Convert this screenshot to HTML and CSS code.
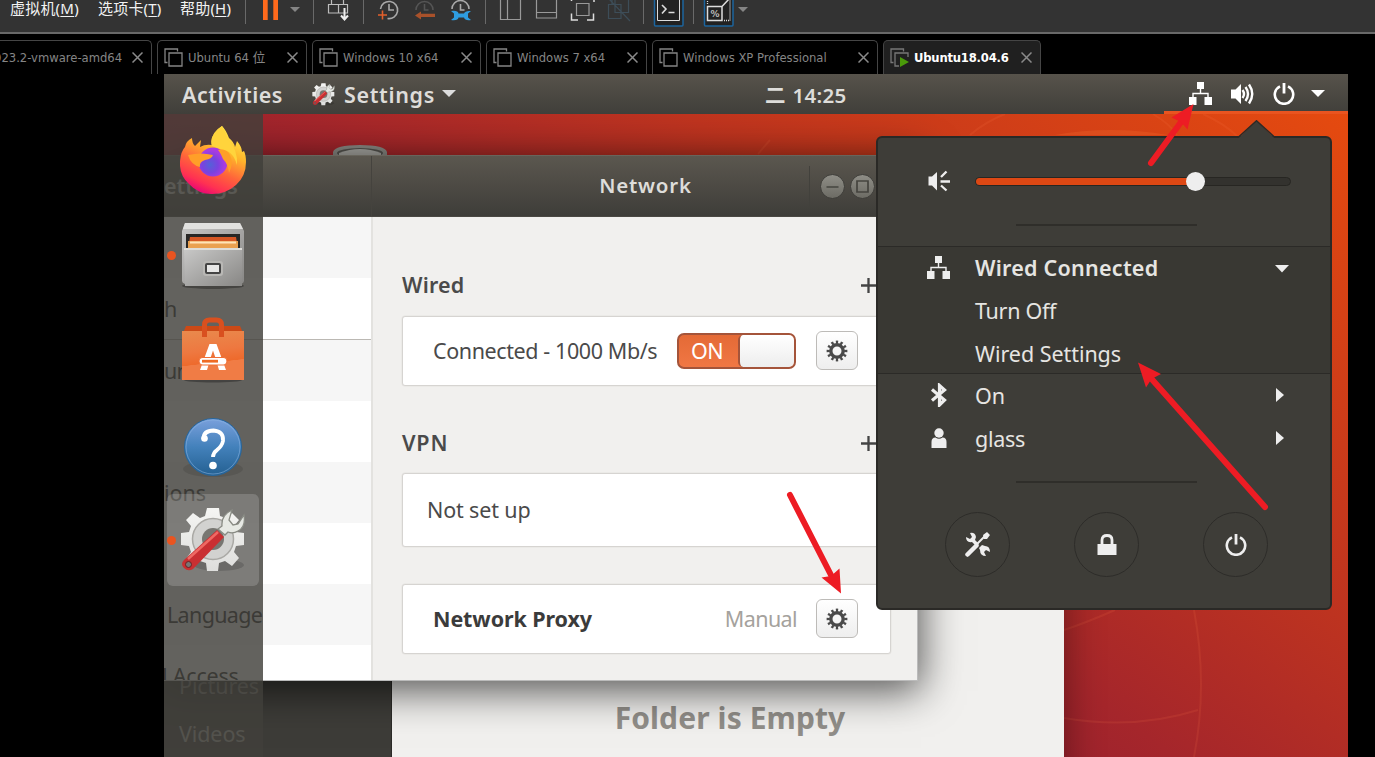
FILE: index.html
```html
<!DOCTYPE html>
<html lang="zh">
<head>
<meta charset="utf-8">
<title>Ubuntu18.04.6</title>
<link rel="stylesheet" href="styles.css">
</head>
<body>
<svg class="defs" width="0" height="0">
  <defs>
    <symbol id="vm" viewBox="0 0 19 19"><path d="M3.500 14.500H1V1H13.500V3.500M5 5H18V18H5Z" fill="none" stroke="currentColor" stroke-width="1.300"/></symbol>
    <symbol id="x" viewBox="0 0 11 11"><path d="M.5.5 10.500 10.500M10.500.5.5 10.500" stroke="currentColor" stroke-width="1.500"/></symbol>
    <symbol id="net" viewBox="0 0 23 23"><path d="M8 0h7v7H8zM0 15h7.500v8H0zM15.500 15H23v8h-7.500z" fill="currentColor"/><path d="M11.500 7v4.500M4 15v-3.500h15V15" fill="none" stroke="currentColor" stroke-width="1.400"/></symbol>
    <symbol id="power" viewBox="0 0 22 22"><path d="M7 3.300A9.200 9.200 0 1 0 15 3.300" fill="none" stroke="currentColor" stroke-width="2.600"/><path d="M11 0v10.500" stroke="currentColor" stroke-width="2.800"/></symbol>
    <symbol id="gear" viewBox="0 0 22 22"><g fill="none" stroke="currentColor"><circle cx="11" cy="11" r="6.200" stroke-width="3.400"/><circle cx="11" cy="11" r="8.800" stroke-width="3.200" pathLength="24" stroke-dasharray="1 1" stroke-dashoffset=".5"/></g></symbol>
    <symbol id="wrenchgear" viewBox="0 0 64 66">
      <ellipse cx="38" cy="58" rx="25" ry="6" fill="#000" opacity=".15"/>
      <path fill="url(#silver)" d="M26 1h12l1 8 6 2 6-5 7 7-5 6 2 6 8 1v12l-8 1-2 6 5 6-7 8-7-5-6 2-1 8H26l-1-8-6-2-7 5-7-7 5-7-2-6-8-1V26l8-1 2-6-5-6 7-7 7 5 5-2z"/>
      <circle cx="32" cy="32" r="20.500" fill="#d2d2d0" stroke="#aaa9a5" stroke-width="1.500"/>
      <circle cx="32" cy="32" r="11" fill="#777671"/>
      <path d="M3 53 36 23l7 7L12 62q-5 3-9-1-4-4 0-8z" fill="#c92f32"/><path d="m7 52 30-27" stroke="#ef6963" stroke-width="2.500"/><circle cx="7.500" cy="57.500" r="3" fill="#777" stroke="#711d22"/>
      <path d="m37 22 4-3q-1-11 10-16l-3 10 4 5 5-1 6-9q2 12-6 16-5 3-10 1l-3 3z" fill="#e7e9e4" stroke="#898b84" stroke-width="1.300"/>
    </symbol>
    <linearGradient id="silver" x2="0" y2="1"><stop stop-color="#f5f5f3"/><stop offset="1" stop-color="#dededc"/></linearGradient>
    <linearGradient id="metal" x2="1" y2="1"><stop stop-color="#c9c9c8"/><stop offset="1" stop-color="#888785"/></linearGradient>
    <linearGradient id="knob" x2="0" y2="1"><stop stop-color="#8f8e87"/><stop offset="1" stop-color="#6c6b64"/></linearGradient>
    <linearGradient id="fox" x1=".75" y1="0" x2=".3" y2="1"><stop stop-color="#fff44f"/><stop offset=".35" stop-color="#ffb52b"/><stop offset=".62" stop-color="#ff643a"/><stop offset=".84" stop-color="#ff3152"/><stop offset="1" stop-color="#e5007a"/></linearGradient>
    <radialGradient id="globe" cx=".4" cy=".6"><stop stop-color="#5560d8"/><stop offset=".55" stop-color="#7a42df"/><stop offset="1" stop-color="#a83be0"/></radialGradient>
    <linearGradient id="bag" x2=".15" y2="1"><stop stop-color="#e98a4d"/><stop offset=".45" stop-color="#ee7840"/><stop offset=".7" stop-color="#ee6a2c"/><stop offset=".71" stop-color="#f07c45"/></linearGradient>
    <linearGradient id="blue" x2="0" y2="1"><stop stop-color="#7aa0dc"/><stop offset=".5" stop-color="#4381bb"/><stop offset="1" stop-color="#246091"/></linearGradient>
  </defs>
</svg>

<header class="menubar">
  <span class="menu m1">虚拟机(<u>M</u>)</span>
  <span class="menu m2">选项卡(<u>T</u>)</span>
  <span class="menu m3">帮助(<u>H</u>)</span>
  <i class="sep"></i>
  <svg width="67" height="32" viewBox="246 0 67 32"><path d="M263 0h4.700v20H263zM273.300 0h4.700v20h-4.700z" fill="#ff6a1c"/><path d="M290 7h10l-5 5z" fill="#858585"/></svg>
  <i class="sep"></i>
  <svg width="49" height="32" viewBox="314 0 49 32" fill="none" stroke="#bdbdbd" stroke-width="1.200"><path d="M331.500-2V4.500H343.500V-2M328.500 4.500H347.500V13H328.500ZM338.500 4.500V13"/><path d="M344.500 8V19M341 15.500l3.500 4 3.500-4" stroke="#eee" stroke-width="2"/></svg>
  <i class="sep"></i>
  <svg width="121" height="32" viewBox="364 0 121 32" fill="none" stroke-width="1.600"><path d="M380.500 9a8.600 8.600 0 1 1 7 9.500M389 4v6h5" stroke="#a9a9a9"/><path d="M378 15h9M382.500 10.500v9" stroke="#e2602c"/><path d="M416 10a8.500 8.500 0 0 1 17 0M424.500 4v6h4" stroke="#555"/><path d="M421 11.500v2.200h14v3.300h-14v2.500l-6-4z" fill="#a9512a"/><path d="M452 9a8.500 8.500 0 0 1 17 0M460.500 4v6h4" stroke="#a9a9a9"/><path d="M451 11q7-1 7.500 2.500H464q1-3 7-2.500l-3 2.500v4l3 2.500q-6 1-7-2.500H458.500Q458 21 451 20l3-2.500v-4z" fill="#2e9de0"/></svg>
  <i class="sep"></i>
  <svg width="157" height="32" viewBox="486 0 157 32" fill="none" stroke="#999" stroke-width="1.200"><path d="M500.500-1V19.500H520.500V-1M507.500 0V19.500M536.500-1V18H556.500V-1M536.500 12.500H556.500"/><path d="M576.500 3.500h12.500v12h-12.500z"/><path d="M571.500 1V-1M594-1V2M571.500 13.500V20H578M587 20H593.500V13.500" stroke="#ddd" stroke-width="1.500"/><path d="M612-1V4M608.500 4.500H621V18.500H608.500ZM615-1V12.500H628.500V0M609-1 630 21" stroke="#3d4d58"/></svg>
  <i class="sep"></i>
  <svg width="49" height="32" viewBox="644 0 49 32" fill="none"><path d="M654.500-2V25q0 1 1 1H682q1 0 1-1V-2" fill="#222" stroke="#1c659f" stroke-width="1.500"/><path d="M657.500-1V20.500H679.500V-1" stroke="#ddd"/><path d="m662 5 4 4-4 4.500M668.500 12.500h6" stroke="#ddd" stroke-width="1.600"/></svg>
  <i class="sep"></i>
  <svg width="60" height="32" viewBox="694 0 60 32" fill="none"><path d="M704.500-2V25q0 1 1 1H732q1 0 1-1V-2" fill="#222" stroke="#1c659f" stroke-width="1.500"/><path d="M707.500 6.500H722V20.500H707.500ZM722 6.500 729-1" stroke="#ddd" stroke-width="1.500"/><path d="M724 20.500H730V0M707.500-1V5" stroke="#ddd" stroke-width="1.300" stroke-dasharray="1 1"/><text x="710.500" y="17" class="pct">%</text><path d="M738 7h10l-5 5z" fill="#858585"/></svg>
</header>

<nav class="tabs">
  <div class="tab t1"><span>023.2-vmware-amd64</span><svg class="close"><use href="#x"/></svg></div>
  <div class="tab t2"><svg class="vm"><use href="#vm"/></svg><span>Ubuntu 64 位</span><svg class="close"><use href="#x"/></svg></div>
  <div class="tab t3"><svg class="vm"><use href="#vm"/></svg><span>Windows 10 x64</span><svg class="close"><use href="#x"/></svg></div>
  <div class="tab t4"><svg class="vm"><use href="#vm"/></svg><span>Windows 7 x64</span><svg class="close"><use href="#x"/></svg></div>
  <div class="tab t5"><svg class="vm"><use href="#vm"/></svg><span>Windows XP Professional</span><svg class="close"><use href="#x"/></svg></div>
  <div class="tab t6 active"><svg class="vm" viewBox="0 0 19 19"><path d="M3.500 14.500H1V1H13.500V3.500M9 18H5V5H18V9" fill="none" stroke="#777" stroke-width="1.300"/><path d="m10 9 9 5-9 5z" fill="#4a9a0a"/></svg><span>Ubuntu18.04.6</span><svg class="close"><use href="#x"/></svg></div>
</nav>

<main class="desktop">
  <svg class="wallpaper" width="1184" height="683" viewBox="164 74 1184 683" fill="none">
    <g stroke="#ff7a50" stroke-opacity=".13" stroke-width="2"><path d="M970 135Q985 122 1005 114M1153 114Q1170 124 1177 135M1203 114Q1225 124 1238 137M1064 630Q1088 622 1115 610M1194 610Q1208 685 1194 757M1064 718Q1135 730 1198 710M758 154 770 140"/></g>
    <path d="M1055 135Q1110 125 1168 135z" fill="#f06a30" fill-opacity=".3"/>
    <path d="M333 160v-8q2-7 27-7t27 7v8z" fill="#8c8c86"/><ellipse cx="360" cy="153" rx="23" ry="5" fill="#55544f"/><path d="M339 153q21-8 42 0v3h-42z" fill="#aaa9a4"/>
  </svg>

  <section class="files">
    <aside><span>Pictures</span><span>Videos</span></aside>
    <div class="empty">Folder is Empty</div>
  </section>

  <section class="settings">
    <div class="titlebar">
      <div class="tb-left">ettings</div>
      <div class="tb-right"><h1>Network</h1>
        <div class="winbtns"><svg width="25" height="25" viewBox="0 0 25 25"><circle cx="12.500" cy="12.500" r="12" fill="url(#knob)" stroke="#3d3c38"/><path d="M6.500 13H18.500" stroke="#45443f" stroke-width="1.500"/></svg><svg width="25" height="25" viewBox="0 0 25 25"><circle cx="12.500" cy="12.500" r="12" fill="url(#knob)" stroke="#3d3c38"/><path d="M7 7h11v11H7z" fill="none" stroke="#45443f" stroke-width="1.700"/></svg></div>
      </div>
    </div>
    <div class="body">
      <ul class="cats"><li></li><li class="line">h</li><li class="bgd">un</li><li></li><li>ions</li><li></li><li class="lang">Language</li><li><b>l Access</b></li></ul>
      <div class="panel">
        <h2><span class="s-wired">Wired</span><svg width="15" height="15"><path d="M0 7.500h15M7.500 0v15" stroke="#444" stroke-width="2.300"/></svg></h2>
        <div class="card c1"><span class="s-conn">Connected - 1000 Mb/s</span><div class="switch"><span>ON</span><i></i></div><button><svg><use href="#gear"/></svg></button></div>
        <h2 class="vpn"><span class="s-vpn">VPN</span><svg width="15" height="15"><path d="M0 7.500h15M7.500 0v15" stroke="#444" stroke-width="2.300"/></svg></h2>
        <div class="card c2"><span class="s-not">Not set up</span></div>
        <div class="card c3"><strong>Network Proxy</strong><span class="manual">Manual</span><button><svg><use href="#gear"/></svg></button></div>
      </div>
    </div>
  </section>

  <div class="topbar">
    <span class="act">Activities</span>
    <svg class="appicon" width="23" height="23"><use href="#wrenchgear"/></svg>
    <span class="app">Settings</span>
    <svg width="14" height="8"><path d="M0 0h14L7 7z" fill="#ddd"/></svg>
    <span class="clock"><span class="er">二</span> 14:25</span>
    <div class="status">
      <svg width="23" height="23"><use href="#net"/></svg>
      <svg width="24" height="22" viewBox="0 0 24 22"><path d="M0 6.500h4.500L10 1v20l-5.500-5.500H0z" fill="#fff"/><path d="M11.500 7q3 4 0 8M14.500 4q5 7 0 14M18 1.500q6.500 9.500 0 19" fill="none" stroke="#fff" stroke-width="2.400"/></svg>
      <svg width="22" height="22"><use href="#power"/></svg>
      <svg width="14" height="8"><path d="M0 0h14L7 7z" fill="#fff"/></svg>
    </div>
  </div>

  <nav class="dock">
    <div class="app-slot"><svg width="66" height="68" viewBox="0 0 66 68"><path fill="url(#fox)" d="M42 0q4 4 7 12 5 4 6 9l2-6q5 6 5 11l2-1q2 4 2 11 0 14-10 23-10 9-24 9-14 0-23-10Q-1 49 0 35 1 25 5 21q1-6 7-9 0 5 3 8l6-6-1 7q5-3 12-2-2-12 10-19z"/><circle cx="33" cy="36" r="14.500" fill="url(#globe)"/><path d="M8 29q13-3 25 0-1 4-8 5-6 2-5 7-9-2-12-12zM38 24q8-3 12 5 4 8-1 18-1-9-6-14-3-7-5-9z" fill="#ff9f28"/><path d="M32 20q-4-9 10-20 4 6 6 13 10 11 9 26-4-15-17-16z" fill="#ffd43c"/></svg></div>
    <div class="app-slot run files-app"><svg width="64" height="68" viewBox="0 0 64 68"><ellipse cx="32" cy="64" rx="31" ry="3" fill="#000" opacity=".3"/><path d="M4 1h55l4 8v50q0 2-3 3H4q-3-1-3-3V9z" fill="url(#metal)"/><path d="M4 1h55l3 6H2z" fill="#e1e1df"/><path d="M5 12h54v20H5z" fill="#282725"/><path d="M9 15h46l2 12H7z" fill="#d65724"/><path d="M7 19h50v11H7z" fill="#eaa150"/><path d="M9 20.500h46" stroke="#ffe4b8" stroke-width="2"/><path d="M3 26h58v38H4z" fill="url(#metal)"/><path d="M3 27h58" stroke="#deddd9" stroke-width="2"/><rect x="22" y="39" width="20" height="15" rx="3" fill="#b9b8b5"/><rect x="25" y="42" width="14" height="9" rx="1" fill="#e7e7e6" stroke="#444" stroke-width="2"/></svg></div>
    <div class="app-slot bag-app"><svg width="64" height="66" viewBox="0 0 64 66"><ellipse cx="32" cy="63" rx="29" ry="2.500" fill="#000" opacity=".3"/><path d="M5 9h54l3 7H2z" fill="#cc4916"/><path fill="url(#bag)" d="M1 14h62v49H1z"/><path d="M23.500 20V8q0-5 5-5h7q5 0 5 5v12" fill="none" stroke="#d9501f" stroke-width="5"/><path d="M19 53 28.500 27h7L45 53h-7l-1.500-5h-9L26 53zM29.500 41h5L32 33.500z" fill="#fff"/><rect x="18" y="40.500" width="28" height="7.500" rx="3.700" fill="#fff" stroke="#ef7137" stroke-width="1.200"/><path d="M21 44.200h16" stroke="#ef6b24" stroke-width="2.800"/></svg></div>
    <div class="app-slot help"><svg width="62" height="62" viewBox="0 0 62 62"><ellipse cx="31" cy="53" rx="30" ry="8" fill="#000" opacity=".1"/><circle cx="31" cy="31" r="28.500" fill="url(#blue)" stroke="#26659b"/><circle cx="31" cy="31" r="27" fill="none" stroke="#8ab4e2" stroke-opacity=".55"/><path d="M21.500 23q0-8.500 10-8.500Q42 15.500 41 25q-1 5-6 9-4 3-4 7" fill="none" stroke="#fff" stroke-width="3.800"/><circle cx="22.500" cy="22.500" r="3.300" fill="#fff"/><circle cx="31" cy="49.500" r="3.800" fill="#fff"/></svg></div>
    <div class="app-slot run current"><svg width="64" height="66"><use href="#wrenchgear"/></svg></div>
  </nav>

  <section class="popover">
    <svg class="beak" width="40" height="19" viewBox="0 0 40 19"><path d="M0 18.500H1L19.500 1 38 18.500H40V19H0Z" fill="#3e3d38"/><path d="M1 17.500 19.500.8 38 17.500" fill="none" stroke="#2b2a27" stroke-width="1.500"/></svg>
    <div class="row vol"><svg class="ic" viewBox="0 0 24 24"><path d="M1.500 7.500H5L10 3v18.500l-5-5H1.500z" fill="#eee"/><path d="M13.500 12.500H23M14 8l5.500-5.500M14 16.500l5.500 5" stroke="#eee" stroke-width="2.300"/></svg><div class="slider"><i></i><b></b></div></div>
    <hr>
    <div class="group">
      <div class="row"><svg class="ic net"><use href="#net"/></svg><strong>Wired Connected</strong><svg class="chev" width="14" height="8"><path d="M0 0h14L7 7.500z" fill="#eee"/></svg></div>
      <div class="row"><i class="ic"></i><span class="s-off">Turn Off</span></div>
      <div class="row"><i class="ic"></i><span class="s-set">Wired Settings</span></div>
    </div>
    <div class="row"><svg class="ic" viewBox="0 0 24 24"><path d="m5 6.500 12.500 10.500-5 5V2.500l5 4.500L5 17.500" fill="none" stroke="#eee" stroke-width="3.200"/></svg><span class="s-on">On</span><svg class="chev r" width="8" height="14"><path d="M0 0l8 7-8 7z" fill="#eee"/></svg></div>
    <div class="row"><svg class="ic" viewBox="0 0 24 24"><circle cx="12" cy="7" r="4.700" fill="#eee"/><path d="M4.500 22v-6q0-4.500 4-4.500 3.500 2.500 7 0 4 0 4 4.500V22z" fill="#eee"/></svg><span class="s-glass">glass</span><svg class="chev r" width="8" height="14"><path d="M0 0l8 7-8 7z" fill="#eee"/></svg></div>
    <hr class="second">
    <div class="actions">
      <button><svg width="25" height="25" viewBox="0 0 25 25"><path d="m2.500 22.500 9-9" stroke="#eee" stroke-width="4.500" stroke-linecap="round"/><path d="m11 13 11-11" stroke="#eee" stroke-width="2"/><path d="m18 3 4-3 3 3-3 4h-3zM5 1q5-1 6 4l-1 3 4 4-3 2-4-4Q1 11 1 5l4 2 2-2zM14 16l3-3 3 1q5 0 5 6l-4-2-2 2 2 4q-6 0-6-6z" fill="#eee"/></svg></button>
      <button><svg width="20" height="22" viewBox="0 0 20 22"><path d="M.5 10h19v11H.5z" fill="#eee"/><path d="M5 11V6q0-4.500 5-4.500T15 6v5" fill="none" stroke="#eee" stroke-width="2.800"/></svg></button>
      <button class="pw"><svg width="22" height="22"><use href="#power"/></svg></button>
    </div>
  </section>

  <svg class="arrows" width="1184" height="683" viewBox="164 74 1184 683"><g stroke="#ed1c24" stroke-width="6" stroke-linecap="round"><path d="M1151 163 1184 118M1265 507 1149 376M790 495 832 577"/></g><path d="M1193.500 104 1171.500 117.500 1181 122 1187.500 129.500zM1138 362.500 1161 374 1151.500 379 1146 387.500zM841 593.500 821.500 577.500 831 576 839.500 568.500z" fill="#ed1c24"/></svg>
</main>
</body>
</html>
```
FILE: styles.css
```css
* { box-sizing: border-box; }
body { margin: 0; width: 1375px; height: 757px; overflow: hidden; background: #000; font-family: "Noto Sans", "Noto Sans CJK SC", sans-serif; }
.defs { position: absolute; }
svg { display: block; flex: none; }
h1, h2, ul { margin: 0; padding: 0; }
button { padding: 0; border: 0; background: none; }

.menubar { height: 34px; background: #333; border-bottom: 2px solid #696969; display: flex; padding-left: 10px; }
.menu { color: #f2f2f2; font: 15px/17px "Noto Sans", "Noto Sans CJK SC", sans-serif; letter-spacing: .2px; white-space: nowrap; flex: none; }
.menu u { text-underline-offset: 2px; text-decoration-thickness: 1px; }
.m1 { width: 88px; } .m2 { width: 82px; } .m3 { width: 65px; }
.sep { width: 1px; height: 24px; background: #696969; flex: none; }
.pct { font: bold 9px "DejaVu Sans", sans-serif; fill: #bbb; }

.tabs { display: flex; gap: 5px; height: 40px; padding-top: 6px; }
.tab { display: flex; align-items: center; height: 34px; flex: none; padding: 0 8px 1px 6px; color: #858585; border: 1px solid #454545; border-bottom: 0; border-radius: 5px 5px 0 0; font: 12.900px/21px "DejaVu Sans Condensed", "DejaVu Sans", "Noto Sans CJK SC", sans-serif; font-stretch: condensed; white-space: nowrap; }
.tab span { flex: 1; margin-left: 6px; }
.vm { width: 19px; height: 19px; margin-right: -1px; }
.close { width: 11px; height: 11px; color: #8a8a8a; }
.t1 { width: 152px; padding-left: 0; border-left: 0; border-radius: 0 5px 0 0; overflow: hidden; }
.t1 span { margin-left: -6px; }
.t2 { width: 150px; } .t3 { width: 169px; } .t4 { width: 161px; } .t5 { width: 226px; } .t6 { width: 158px; }
.active { background: #202020; color: #fff; font-weight: bold; letter-spacing: -.2px; }

.desktop { position: relative; width: 1184px; height: 683px; margin-left: 164px; overflow: hidden; background: linear-gradient(36.5deg, #9b212e 40%, #a5262b 48%, #bf341f 66%, #e84c0e 100%); }
.wallpaper, .arrows { position: absolute; left: 0; top: 0; }
.arrows { z-index: 9; }

.topbar { position: absolute; left: 0; top: 0; width: 1184px; height: 40px; display: flex; align-items: center; padding: 0 0 0 18px; background: linear-gradient(#57534b, #403f3a); color: #deddda; font-size: 21.500px; font-weight: 600; }
.act { width: 130px; letter-spacing: .5px; }
.app { margin: 0 7px 0 9px; letter-spacing: .65px; }
.clock { position: absolute; left: 601px; top: 6px; line-height: 30px; font-size: 20.500px; letter-spacing: .3px; white-space: nowrap; }
.er { margin-right: 1px; }
.status { position: absolute; right: 0; top: 0; width: 184px; height: 40px; border-bottom: 3px solid #e95420; display: flex; align-items: center; padding: 2px 0 0 25px; gap: 19px; color: #fff; }
.status svg:nth-child(2) { margin-right: -1px; }
.status svg:last-child { margin-left: -3px; }

.dock { position: absolute; left: 0; top: 40px; width: 99px; height: 643px; padding-right: 2px; background: rgba(65, 64, 59, .82); display: flex; flex-direction: column; align-items: center; gap: 3px; }
.app-slot { position: relative; width: 92px; height: 92px; flex: none; display: flex; align-items: center; justify-content: center; border-radius: 6px; }
.run::before { content: ""; position: absolute; left: 0; top: 42px; width: 9px; height: 9px; border-radius: 50%; background: #e95420; }
.current { background: rgba(255, 255, 255, .17); }
.help { padding-top: 4px; }
.files-app { padding-top: 2px; }

.files { position: absolute; left: -100px; top: 300px; width: 1000px; height: 500px; display: flex; background: #f1f0ee; box-shadow: 0 8px 36px rgba(0, 0, 0, .4); }
.files aside { width: 328px; flex: none; background: #3d3c38; border-right: 1px solid #2c2b28; padding: 288px 0 0 115px; display: flex; flex-direction: column; color: #a9a7a0; font-size: 21.500px; line-height: 48px; letter-spacing: -.1px; }
.empty { flex: 1; text-align: center; padding-top: 322px; padding-left: 4px; line-height: 44px; font-size: 30px; font-weight: 700; color: #918e89; letter-spacing: .1px; }

.settings { position: absolute; left: 0; top: 81px; width: 754px; height: 526px; background: #f1f0ee; box-shadow: 0 7px 38px 3px rgba(0, 0, 0, .65); display: flex; flex-direction: column; border-bottom: 1px solid #bbb; border-right: 1px solid #bbb; }
.titlebar { display: flex; height: 62px; flex: none; background: linear-gradient(#5b574f, #3e3d39); border-top: 1px solid #68655c; border-bottom: 1px solid #4a4843; }
.tb-left { width: 208px; border-right: 1px solid #45433e; color: #c9c7c0; font-size: 21.500px; font-weight: 600; line-height: 60px; }
.tb-right { flex: 1; position: relative; }
.tb-right h1 { text-align: center; padding-left: 2px; font-size: 20.500px; font-weight: 600; line-height: 59px; color: #deddda; letter-spacing: .75px; }
.winbtns { position: absolute; left: 437px; top: 10px; height: 41px; border-left: 1px solid #42413c; padding-left: 10px; display: flex; gap: 5px; align-items: center; }
.body { display: flex; flex: 1; min-height: 0; }
.cats { width: 209px; list-style: none; border-right: 2px solid #e3e2df; background: #fff; color: #222; font-size: 21.500px; overflow: hidden; flex: none; }
.cats li { height: 61px; line-height: 61px; white-space: nowrap; }
.cats li:nth-child(odd) { background: #f6f6f6; }
.cats .line { height: 62px; border-bottom: 1px solid #bbb8b3; }
.cats .bgd { letter-spacing: -.8px; height: 60.500px; }
.cats .lang { padding-left: 3px; letter-spacing: -.65px; }
.cats b { font-weight: 400; margin-left: -2px; line-height: 57px; letter-spacing: -.2px; }
.panel { flex: 1; padding: 48px 26px 0 29px; color: #4a4a4a; font-size: 21.500px; }
.panel h2 { display: flex; justify-content: space-between; align-items: center; font-size: 21.500px; font-weight: 600; line-height: 40px; height: 40px; margin-bottom: 11px; padding-right: 15px; letter-spacing: .2px; }
.panel .vpn { margin: 37px 0 10px; letter-spacing: .8px; }
.card { display: flex; align-items: center; background: #fff; border: 1.500px solid #d6d4d1; box-shadow: 0 0 0 .5px #e5e3e0; border-radius: 3px; height: 70px; padding: 0 31px 1px 30px; white-space: nowrap; }
.c2 { height: 74px; padding-left: 24px; }
.c3 { height: 70px; margin-top: 37px; color: #3b3b3b; padding-right: 32px; }
.card button { width: 42px; height: 39px; border: 1.500px solid #bdbbb8; border-radius: 6px; background: linear-gradient(#fff, #eee); display: flex; align-items: center; justify-content: center; color: #4a4a4a; flex: none; }
.card button svg { width: 22px; height: 22px; }
.s-conn { width: 244px; flex: none; letter-spacing: -.4px; }
.s-not { letter-spacing: -.15px; }
.switch { width: 119px; height: 36px; flex: none; border: 2px solid #a4543a; border-radius: 7px; background: linear-gradient(#e46a36, #f07744); display: flex; color: #fff; line-height: 31px; margin-right: 20px; }
.switch span { width: 59px; padding-left: 12px; letter-spacing: -.6px; }
.switch i { flex: 1; background: linear-gradient(#fff, #ededed); border-radius: 5px; border-left: 2px solid #a4543a; }
.card strong { font-weight: 700; flex: 1; letter-spacing: -.1px; }
.manual { color: #a5a29d; margin-right: 19px; letter-spacing: -.6px; }

.popover { position: absolute; left: 712px; top: 62px; width: 456px; height: 474px; background: #3e3d38; border: 2px solid #2a2926; border-radius: 6px; color: #e6e5e2; font-size: 21.500px; }
.beak { position: absolute; left: 359px; top: -18px; }
.row { display: flex; align-items: center; height: 43px; padding: 0 38px 1px 49px; white-space: nowrap; }
.ic { width: 24px; height: 24px; margin-right: 24px; flex: none; }
.ic.net { width: 23px; height: 23px; margin-right: 25px; color: #eee; }
.vol { height: 86px; padding-bottom: 0; }
.slider { position: relative; width: 316px; height: 9px; border: 1px solid #272622; border-radius: 5px; background: #33322e; }
.slider i { display: block; width: 219px; height: 7px; border-radius: 4px; background: #dd4814; }
.slider b { position: absolute; left: 210px; top: -6px; width: 19px; height: 19px; border-radius: 50%; background: #eee; }
.popover hr { width: 181px; height: 2px; border: 0; margin: 0 0 0 138px; background: #2f2e2a; }
.group { margin: 20px 0 0; height: 128px; background: #393833; box-shadow: inset 0 1px #2b2a27, inset 0 -1px #2b2a27; }
.popover strong { font-weight: 600; letter-spacing: .25px; }
.chev { margin-left: auto; margin-right: 3px; position: relative; top: 2px; }
.chev.r { margin-right: 8px; top: 0; }
.s-off, .s-glass { letter-spacing: -.3px; }
.s-set { letter-spacing: -.05px; }
.popover .second { margin-top: 21px; }
.actions { display: flex; justify-content: space-between; padding: 29px 62px 0 67px; }
.actions button { width: 65px; height: 65px; border: 1px solid #2d2c29; border-radius: 50%; color: #eee; display: flex; align-items: center; justify-content: center; }
```
